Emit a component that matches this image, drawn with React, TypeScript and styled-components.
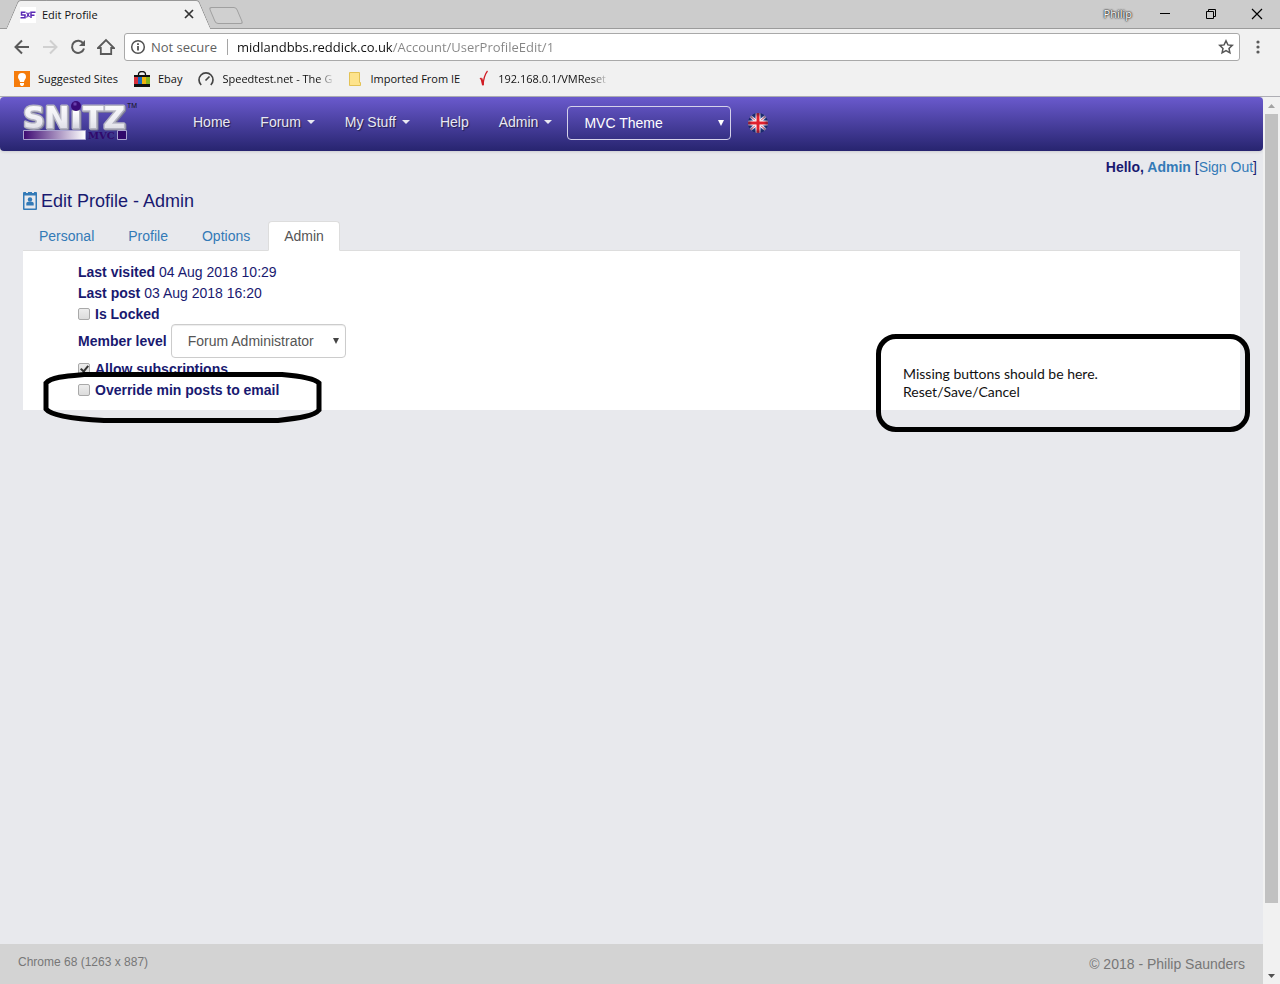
import React from "react";
import styled, { createGlobalStyle, css } from "styled-components";

const ui = `"Open Sans", "Noto Sans", sans-serif`;
const arial = `"Liberation Sans", Arial, sans-serif`;

const GlobalStyle = createGlobalStyle`
  *, *::before, *::after { box-sizing: border-box; }
  body { margin: 0; background: #e8e9ed; font-family: ${arial}; font-size: 14px; line-height: 20px; color: #191970; }
  button, input, select { font: inherit; margin: 0; }
  button { padding: 0; border: 0; background: none; }
  a { color: #337ab7; text-decoration: none; }
`;

const Window = styled.div`
  display: flex;
  flex-direction: column;
  min-height: 100vh;
`;

/* ---------- browser frame ---------- */

const Browser = styled.header`
  background: #f1f1f1;
  border-bottom: 1px solid #aeaeb4;
  font-family: ${ui};
  font-size: 11px;
  color: #111;
`;

const TabStrip = styled.div`
  display: flex;
  height: 29px;
  padding-left: 12px;
  background: #cccccc;
  box-shadow: inset 0 -1px #9b9b9b;
`;

const BrowserTab = styled.div`
  position: relative;
  isolation: isolate;
  display: flex;
  align-items: center;
  width: 193px;
  height: 29px;
  padding: 0 11px 0 8px;
  &::before, &::after {
    content: "";
    position: absolute;
    z-index: -1;
    top: 0;
    bottom: 0;
    background: #f1f1f1;
    border-top: 1px solid #979797;
  }
  &::before { left: 0; right: 40px; border-left: 1px solid #8c8c8c; border-top-left-radius: 3px; transform: skewX(-23deg); }
  &::after { right: 0; left: 40px; border-right: 1px solid #8c8c8c; border-top-right-radius: 3px; transform: skewX(23deg); }
`;

const TabTitle = styled.span`
  flex: 1;
  margin-left: 6px;
`;

const NewTab = styled.button`
  width: 28px;
  height: 17px;
  margin: 7px 0 0 7px;
  border: 1px solid #a0a0a0;
  border-radius: 3px;
  background: #d0d0d0;
  transform: skewX(23deg);
`;

const WindowControls = styled.div`
  display: flex;
  align-items: center;
  margin-left: auto;
  height: 27px;
`;

const UserName = styled.button`
  margin-right: 10px;
  color: #fff;
  text-shadow: 0 0 1px #222, 0 0 2px #222, 0 0 2px #444;
`;

const ControlButton = styled.button`
  display: grid;
  place-items: center;
  width: 46px;
  height: 27px;
`;

const Toolbar = styled.div`
  display: flex;
  align-items: center;
  height: 36px;
  padding: 0 8px;
`;

const ToolButton = styled.button`
  display: grid;
  place-items: center;
  width: 28px;
  height: 28px;
`;

const StarButton = styled.button`
  display: grid;
  place-items: center;
  width: 16px;
  height: 16px;
`;

const Omnibox = styled.form`
  display: flex;
  flex: 1;
  align-items: center;
  height: 28px;
  margin: 0 4px;
  padding: 0 5px;
  border: 1px solid #a9a9a9;
  border-radius: 3px;
  background: #fff;
  font-size: 13px;
`;

const Security = styled.span`
  margin-left: 5px;
  padding-right: 10px;
  border-right: 1px solid #a5a5a5;
  line-height: 16px;
  color: #5f5f5f;
`;

const Address = styled.input`
  flex: 1;
  min-width: 0;
  margin-left: 9px;
  padding: 0;
  border: 0;
  outline: 0;
  background: linear-gradient(90deg, #111 156px, #858585 156px);
  background-clip: text;
  -webkit-text-fill-color: transparent;
`;

const Bookmarks = styled.nav`
  display: flex;
  align-items: center;
  gap: 16px;
  height: 31px;
  padding: 0 14px 4px;
`;

const Bookmark = styled.a<{ $fade?: boolean }>`
  display: flex;
  flex: none;
  align-items: center;
  gap: 8px;
  color: #111;
  white-space: nowrap;
  ${p => p.$fade && css`mask-image: linear-gradient(90deg, #000 calc(100% - 14px), rgba(0, 0, 0, 0.15));`}
  svg { flex: none; }
`;

/* ---------- web page ---------- */

const Viewport = styled.div`
  display: flex;
  flex: 1;
`;

const Page = styled.div`
  display: flex;
  flex: 1;
  flex-direction: column;
  min-width: 0;
`;

const Navbar = styled.nav`
  display: flex;
  align-items: center;
  height: 54px;
  padding: 0 0 2px 22px;
  border-radius: 4px;
  background: linear-gradient(#6a5acd, #27246f);
  box-shadow: 0 1px 3px rgba(0, 0, 0, 0.12);
`;

const Brand = styled.a`
  display: block;
  width: 156px;
  height: 46px;
`;

const NavLink = styled.a`
  display: flex;
  align-items: center;
  padding: 0 15px;
  margin-bottom: 2px;
  color: #e9e9f2;
  text-shadow: 1px 1px 1px rgba(0, 0, 0, 0.5);
`;

const Caret = styled.span`
  margin-left: 6px;
  border: 4px solid transparent;
  border-top-color: currentColor;
  border-bottom: 0;
`;

const SelectBox = styled.span<{ $width: number; $dark?: boolean }>`
  position: relative;
  display: inline-flex;
  width: ${p => p.$width}px;
  height: 34px;
  color: ${p => (p.$dark ? "#fff" : "#444")};
  select {
    width: 100%;
    padding: 0 16px;
    appearance: none;
    border: 1px solid ${p => (p.$dark ? "#d5d2ea" : "#ccc")};
    border-radius: 4px;
    background: ${p => (p.$dark ? "transparent" : "#fff")};
    box-shadow: ${p => (p.$dark ? "none" : "inset 0 1px 1px rgba(0, 0, 0, 0.075)")};
    color: ${p => (p.$dark ? "#fff" : "#555")};
  }
  svg { position: absolute; right: 7px; top: 14px; pointer-events: none; }
`;

const LanguageButton = styled.button`
  height: 20px;
  margin-left: 17px;
`;

const Greeting = styled.p`
  margin: 6px 6px 0;
  text-align: right;
`;

const Main = styled.main`
  flex: 1;
  padding: 14px 23px 0;
`;

const Title = styled.h1`
  display: flex;
  align-items: center;
  gap: 4px;
  margin: 0 0 10px;
  font-size: 18px;
  line-height: 20px;
  font-weight: 400;
`;

const Tabs = styled.div`
  display: flex;
  gap: 2px;
  border-bottom: 1px solid #ddd;
`;

const Tab = styled.a<{ $active?: boolean }>`
  height: 30px;
  margin-bottom: -1px;
  padding: 4px 15px;
  border: 1px solid transparent;
  border-radius: 4px 4px 0 0;
  ${p => p.$active && css`
    border-color: #ddd #ddd #fff;
    background: #fff;
    color: #555;
  `}
`;

const Panel = styled.form`
  position: relative;
  padding: 10px 55px;
  background: #fff;
`;

const Row = styled.div`
  display: flex;
  align-items: center;
  gap: 4px;
  min-height: 21px;
`;

const FieldLabel = styled.label`
  font-weight: 700;
`;

const CheckLabel = styled.label`
  display: flex;
  align-items: center;
  gap: 5px;
  font-weight: 700;
`;

const Checkbox = styled.input`
  position: relative;
  width: 12px;
  height: 12px;
  appearance: none;
  border: 1px solid #a9a9a9;
  border-radius: 2px;
  background: linear-gradient(#ededed, #dcdcdc);
  &:checked::after {
    content: "";
    position: absolute;
    left: 3px;
    top: 0;
    width: 5px;
    height: 8px;
    border: solid #333;
    border-width: 0 2px 2px 0;
    transform: rotate(40deg);
  }
`;

const EmailMark = styled.svg`
  position: absolute;
  left: 19px;
  top: 120px;
  pointer-events: none;
`;

const ButtonsNote = styled.aside`
  position: absolute;
  right: -10px;
  top: 83px;
  width: 374px;
  height: 98px;
  padding: 26px 22px;
  border: 5px solid #000;
  border-radius: 20px;
  font-family: Lato, Carlito, sans-serif;
  font-size: 14px;
  line-height: 18px;
  color: #111;
`;

const Footer = styled.footer`
  display: flex;
  align-items: center;
  justify-content: space-between;
  height: 40px;
  padding: 0 18px;
  background: #d3d3d3;
  color: #777;
  small { margin-bottom: 4px; font-size: 12px; }
`;

const ScrollTrack = styled.div`
  display: flex;
  flex-direction: column;
  align-items: center;
  width: 17px;
  background: #f1f1f1;
`;

const ScrollButton = styled.button`
  display: grid;
  place-items: center;
  width: 17px;
  height: 17px;
`;

const ScrollThumb = styled.div`
  flex: 789 0 0;
  width: 13px;
  background: #c1c1c1;
`;

const ScrollRest = styled.div`
  flex: 64 0 0;
`;

/* ---------- drawings ---------- */

const Favicon = () => (
  <svg width="16" height="16" viewBox="0 0 16 16" fill="none" stroke="#5a28b4" strokeWidth="1.5">
    <path fill="#fff" stroke="none" d="M0 0h16v16H0z" />
    <path d="M5.500 5.300H1.500V8H5V10.800H.5M11 11V5.300H15.500M11 8.200H14.500" />
    <path d="M6.500 5.500L9.500 10M9.500 5.500L6.500 10.500" strokeWidth="1.300" />
  </svg>
);

const CloseTab = () => (
  <svg width="10" height="10" stroke="#333" strokeWidth="1.7"><path d="M1 1l8 8M9 1l-8 8" /></svg>
);

const Arrow = ({ flip, color }: { flip?: boolean; color: string }) => (
  <svg width="16" height="16" fill="none" stroke={color} strokeWidth="2">
    <path d={flip ? "M1 8h13M8 1.500L14.500 8L8 14.500" : "M15 8H2M8 1.500L1.500 8L8 14.500"} />
  </svg>
);

const Reload = () => (
  <svg width="16" height="16" fill="none" stroke="#5a5a5a" strokeWidth="2">
    <path d="M13.300 4.500A6.100 6.100 0 1 0 14 9.500" /><path d="M15 1v6H9z" fill="#5a5a5a" stroke="none" />
  </svg>
);

const HomeIcon = () => (
  <svg width="18" height="18" fill="none" stroke="#5a5a5a" strokeWidth="1.8">
    <path d="M1 10L9 2l8 8h-2.800v6H3.800v-6z" />
  </svg>
);

const Info = () => (
  <svg width="16" height="16" fill="none" stroke="#505050" strokeWidth="1.500">
    <circle cx="8" cy="8" r="6.300" /><path d="M8 7v4.500M8 4.300v1.700" strokeWidth="1.800" />
  </svg>
);

const Star = () => (
  <svg width="16" height="16" fill="none" stroke="#555" strokeWidth="1.500">
    <path d="M8 1.800l1.900 4.100 4.400.5-3.300 3 .9 4.400L8 11.600l-3.900 2.200.9-4.400-3.300-3 4.400-.5z" />
  </svg>
);

const Dots = () => (
  <svg width="4" height="14" fill="#5a5a5a"><circle cx="2" cy="2" r="1.600" /><circle cx="2" cy="7" r="1.600" /><circle cx="2" cy="12" r="1.600" /></svg>
);

const Bulb = () => (
  <svg width="16" height="16">
    <path fill="#f57c0b" d="M0 0h16v16H0z" />
    <path fill="#fff" d="M8 2a4 4 0 0 0-4 4c0 2 1.700 2.500 2 5h4c.3-2.500 2-3 2-5a4 4 0 0 0-4-4zM6 12h4v1.500L9 15H7l-1-1.500z" />
  </svg>
);

const Bag = () => (
  <svg width="16" height="16">
    <path d="M4.500 4.500V3.500a3.500 3 0 0 1 7 0v1" fill="none" stroke="#111" strokeWidth="1.300" />
    <path d="M0 4h16v12H0z" fill="#111" />
    <path d="M0 6h4v7H0z" fill="#d8303a" /><path d="M4 6h4v7H4z" fill="#1769bd" />
    <path d="M8 6h4v7H8z" fill="#f0b40e" /><path d="M12 6h4v7h-4z" fill="#84b51c" />
  </svg>
);

const Gauge = () => (
  <svg width="16" height="16" fill="none" stroke="#444" strokeWidth="1.700">
    <path d="M3.200 14A7 7 0 1 1 12.800 14M7.500 9.500L11.500 5.500" />
  </svg>
);

const Folder = () => (
  <svg width="14" height="14"><path d="M1.500.5h10v10h1v3h-11z" fill="#fde38c" stroke="#e3c255" /></svg>
);

const Tick = () => (
  <svg width="14" height="17" viewBox="-3 0 14 17" fill="none" stroke="#d01c24"><path d="M1 9l1.500-1" strokeWidth="1.500" /><path d="M2.500 8.500L4 15" strokeWidth="2" /><path d="M4 15.500C4.500 9 6 4 8.500 1" strokeWidth="1.200" /></svg>
);

const Logo = () => (
  <svg width="116" height="46" viewBox="22 100 116 46" aria-label="Snitz MVC">
    <defs>
      <linearGradient id="metal" x1="0" y1="0" x2="0" y2="1"><stop offset="0" stopColor="#fff" /><stop offset=".6" stopColor="#ececf2" /><stop offset="1" stopColor="#d4d4de" /></linearGradient>
      <linearGradient id="bar"><stop offset="0" stopColor="#3d0a72" /><stop offset="1" stopColor="#fff" /></linearGradient>
      <radialGradient id="ball" cx=".4" cy=".3"><stop offset="0" stopColor="#7d55c0" /><stop offset=".5" stopColor="#390b78" /></radialGradient>
      <filter id="bevel"><feDropShadow dx="1" dy="1" stdDeviation="0" floodColor="#7c7c94" /></filter>
    </defs>
    <g fill="url(#metal)" stroke="#b4b4c2" strokeWidth="3" paintOrder="stroke" strokeLinejoin="round" filter="url(#bevel)">
      <g fontFamily="DejaVu Sans" fontWeight="700" fontSize="30">
        <text x="23" y="128">SN</text>
        <text x="83" y="128">TZ</text>
      </g>
      <path d="M73 111h6v17h-6z" />
    </g>
    <circle cx="76" cy="106" r="5" fill="url(#ball)" />
    <path d="M23.500 130.500h62v9h-62z" fill="url(#bar)" stroke="#a9a3cf" />
    <text x="88" y="139" fontFamily="DejaVu Serif" fontWeight="700" fontSize="10" fill="#31096b">MVC</text>
    <path d="M117.500 130.500h9v9h-9z" fill="#31096b" stroke="#a9a3cf" />
    <text x="127" y="108" fontFamily="Liberation Sans" fontSize="7" fill="#111">TM</text>
  </svg>
);

const Flag = () => (
  <svg width="20" height="20" viewBox="0 0 20 20">
    <defs>
      <clipPath id="disc"><circle cx="10" cy="10" r="10" /></clipPath>
      <radialGradient id="gloss"><stop offset=".6" stopColor="#101040" stopOpacity="0" /><stop offset="1" stopColor="#101040" stopOpacity=".5" /></radialGradient>
    </defs>
    <g clipPath="url(#disc)">
      <path fill="#213a86" d="M0 0h20v20H0z" />
      <path stroke="#eef" strokeWidth="3" d="M0 1l20 18M20 1L0 19" />
      <path stroke="#e0505c" strokeWidth="1" d="M0 1l20 18M20 1L0 19" />
      <path stroke="#fff" strokeWidth="5" d="M10 0v20M0 10h20" />
      <path stroke="#e0202e" strokeWidth="3" d="M10 0v20M0 10h20" />
      <path fill="url(#gloss)" d="M0 0h20v20H0z" />
    </g>
  </svg>
);

const Badge = () => (
  <svg width="14" height="18" fill="#337ab7">
    <path d="M1 0h2v1h2V0h4v1h2V0h2q1 0 1 1v16q0 1-1 1H1q-1 0-1-1V1q0-1 1-1zM1.500 3.500v13h11v-13z" fillRule="evenodd" />
    <circle cx="7" cy="7.500" r="2.200" /><path d="M3.300 13.500v-2q0-1.800 1.800-1.800h3.800q1.800 0 1.800 1.800v2z" />
  </svg>
);

const Triangle = ({ up, color = "currentColor", width = 6, height = 6 }: { up?: boolean; color?: string; width?: number; height?: number }) => (
  <svg width={width} height={height} viewBox="0 0 6 6" preserveAspectRatio="none"><path d={up ? "M0 6h6L3 0z" : "M0 0h6L3 6z"} fill={color} /></svg>
);

const navItems = [
  { label: "Home" },
  { label: "Forum", menu: true },
  { label: "My Stuff", menu: true },
  { label: "Help" },
  { label: "Admin", menu: true },
];

export default function App() {
  return (
    <Window>
      <GlobalStyle />
      <Browser>
        <TabStrip>
          <BrowserTab>
            <Favicon />
            <TabTitle>Edit Profile</TabTitle>
            <button aria-label="Close tab"><CloseTab /></button>
          </BrowserTab>
          <NewTab aria-label="New tab" />
          <WindowControls>
            <UserName>Philip</UserName>
            <ControlButton aria-label="Minimize"><svg width="10" height="10" stroke="#000"><path d="M0 4.500h10" /></svg></ControlButton>
            <ControlButton aria-label="Restore"><svg width="10" height="10" fill="none" stroke="#000"><path d="M.5 2.500h7v7h-7zM2.500 2V.5h7v7H8" /></svg></ControlButton>
            <ControlButton aria-label="Close"><svg width="12" height="12" stroke="#000" strokeWidth="1.200"><path d="M1 1l10 10M11 1L1 11" /></svg></ControlButton>
          </WindowControls>
        </TabStrip>
        <Toolbar>
          <ToolButton aria-label="Back"><Arrow color="#5a5a5a" /></ToolButton>
          <ToolButton aria-label="Forward"><Arrow flip color="#d0d0d0" /></ToolButton>
          <ToolButton aria-label="Reload"><Reload /></ToolButton>
          <ToolButton aria-label="Home page"><HomeIcon /></ToolButton>
          <Omnibox>
            <Info />
            <Security>Not secure</Security>
            <Address aria-label="Address" defaultValue="midlandbbs.reddick.co.uk/Account/UserProfileEdit/1" />
            <StarButton type="button" aria-label="Bookmark this page"><Star /></StarButton>
          </Omnibox>
          <ToolButton aria-label="Browser menu"><Dots /></ToolButton>
        </Toolbar>
        <Bookmarks>
          <Bookmark href="#"><Bulb />Suggested Sites</Bookmark>
          <Bookmark href="#"><Bag />Ebay</Bookmark>
          <Bookmark href="#" $fade><Gauge />Speedtest.net - The G</Bookmark>
          <Bookmark href="#"><Folder />Imported From IE</Bookmark>
          <Bookmark href="#" $fade><Tick />192.168.0.1/VMReset</Bookmark>
        </Bookmarks>
      </Browser>

      <Viewport>
        <Page>
          <Navbar>
            <Brand href="#"><Logo /></Brand>
            {navItems.map(item => (
              <NavLink href="#" key={item.label}>{item.label}{item.menu && <Caret />}</NavLink>
            ))}
            <SelectBox $width={164} $dark>
              <select aria-label="Theme"><option>MVC Theme</option></select>
              <Triangle />
            </SelectBox>
            <LanguageButton aria-label="English"><Flag /></LanguageButton>
          </Navbar>
          <Greeting><b>Hello, <a href="#">Admin</a></b> [<a href="#">Sign Out</a>]</Greeting>
          <Main>
            <Title><Badge />Edit Profile - Admin</Title>
            <Tabs>
              <Tab href="#">Personal</Tab>
              <Tab href="#">Profile</Tab>
              <Tab href="#">Options</Tab>
              <Tab href="#" $active>Admin</Tab>
            </Tabs>
            <Panel>
              <Row><b>Last visited</b> <span>04 Aug 2018 10:29</span></Row>
              <Row><b>Last post</b> <span>03 Aug 2018 16:20</span></Row>
              <Row><CheckLabel><Checkbox type="checkbox" />Is Locked</CheckLabel></Row>
              <Row>
                <FieldLabel htmlFor="level">Member level</FieldLabel>
                <SelectBox $width={175}>
                  <select id="level"><option>Forum Administrator</option></select>
                  <Triangle />
                </SelectBox>
              </Row>
              <Row><CheckLabel><Checkbox type="checkbox" defaultChecked />Allow subscriptions</CheckLabel></Row>
              <Row><CheckLabel><Checkbox type="checkbox" />Override min posts to email</CheckLabel></Row>
              <EmailMark width="282" height="54" fill="none" stroke="#000" strokeWidth="5">
                <path d="M42 3.500H240C258 5 272 7 277 12V39C272 45 258 47 236 49.500H62C35 48 9 45 4 38V12C9 6 24 5 42 3.500z" />
              </EmailMark>
              <ButtonsNote>Missing buttons should be here.<br />Reset/Save/Cancel</ButtonsNote>
            </Panel>
          </Main>
          <Footer><small>Chrome 68 (1263 x 887)</small><span>© 2018 - Philip Saunders</span></Footer>
        </Page>
        <ScrollTrack>
          <ScrollButton aria-label="Scroll up"><Triangle up color="#a3a3a3" width={7} height={4} /></ScrollButton>
          <ScrollThumb />
          <ScrollRest />
          <ScrollButton aria-label="Scroll down"><Triangle color="#505050" width={7} height={4} /></ScrollButton>
        </ScrollTrack>
      </Viewport>
    </Window>
  );
}
